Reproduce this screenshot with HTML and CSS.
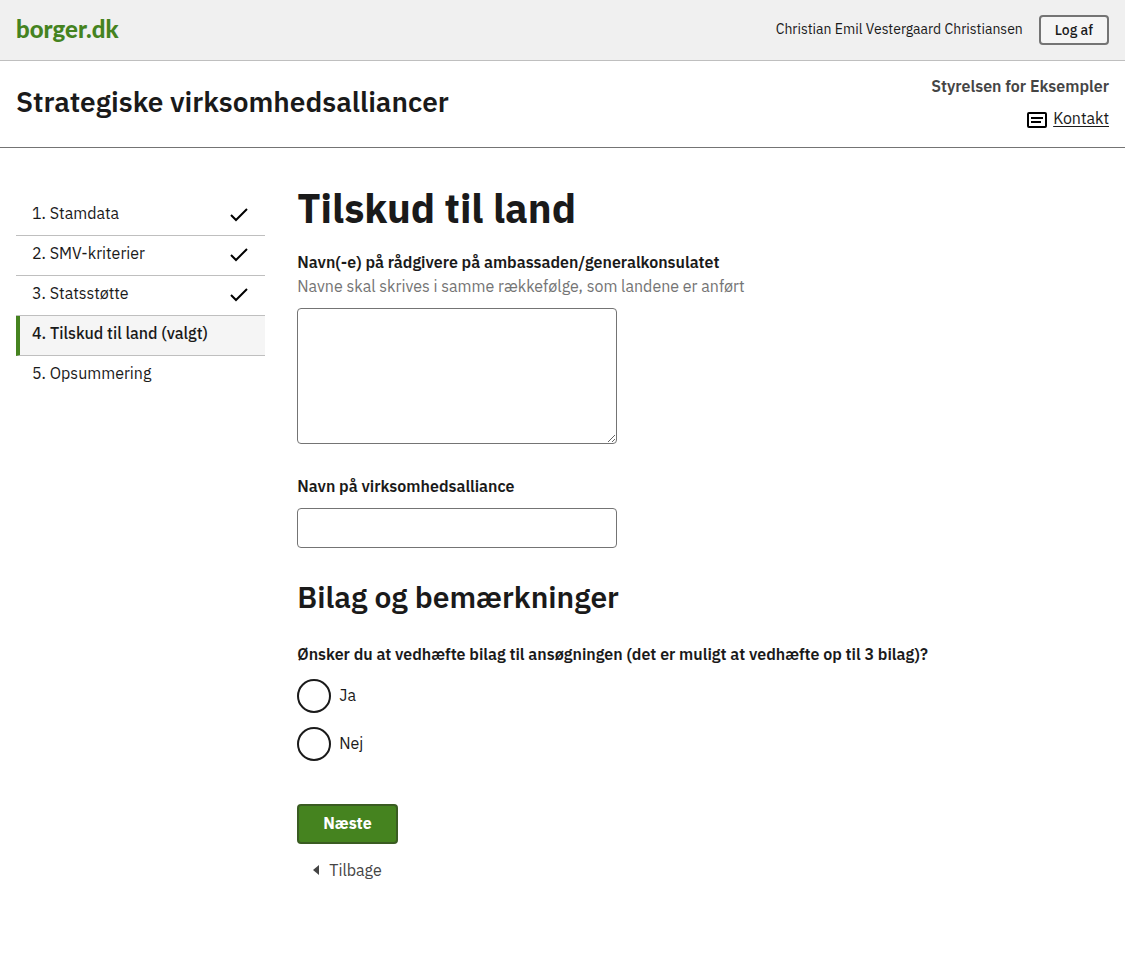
FILE: index.html
```html
<!DOCTYPE html>
<html lang="da">
<head>
<meta charset="utf-8">
<meta name="viewport" content="width=device-width, initial-scale=1">
<title>Tilskud til land - Strategiske virksomhedsalliancer</title>
<link rel="stylesheet" href="styles.css">
</head>
<body>
<header>
  <div class="portal-bar">
    <a class="logo" href="#">borger.dk</a>
    <div class="session">
      <span class="user-name">Christian Emil Vestergaard Christiansen</span>
      <button class="logout" type="button">Log af</button>
    </div>
  </div>
  <div class="solution-bar">
    <p class="solution-title">Strategiske virksomhedsalliancer</p>
    <div class="authority">
      <span class="authority-name">Styrelsen for Eksempler</span>
      <a class="contact" href="#">
        <svg class="contact-icon" viewBox="0 0 20 16" aria-hidden="true"><rect x="1" y="1" width="18" height="14" rx="1" fill="none" stroke="#000" stroke-width="2"/><path d="M4 6h12M4 10h10" stroke="#000" stroke-width="2"/></svg>
        <span class="contact-text">Kontakt</span>
      </a>
    </div>
  </div>
</header>
<div class="page">
  <nav class="steps" aria-label="Trin">
    <ol class="step-list">
      <li><a class="step" href="#">1. Stamdata <svg class="check" viewBox="0 0 18 14" aria-hidden="true"><path d="M1 7l5 5L17 1" fill="none" stroke="#000" stroke-width="2"/></svg></a></li>
      <li><a class="step" href="#">2. SMV-kriterier <svg class="check" viewBox="0 0 18 14" aria-hidden="true"><path d="M1 7l5 5L17 1" fill="none" stroke="#000" stroke-width="2"/></svg></a></li>
      <li><a class="step" href="#">3. Statsstøtte <svg class="check" viewBox="0 0 18 14" aria-hidden="true"><path d="M1 7l5 5L17 1" fill="none" stroke="#000" stroke-width="2"/></svg></a></li>
      <li><a class="step step-current" href="#" aria-current="step">4. Tilskud til land (valgt)</a></li>
      <li><a class="step" href="#">5. Opsummering</a></li>
    </ol>
  </nav>
  <main class="content">
    <h1 class="title">Tilskud til land</h1>
    <form>
      <div class="field">
        <label class="label" for="advisers">Navn(-e) på rådgivere på ambassaden/generalkonsulatet</label>
        <span class="hint" id="advisers-hint">Navne skal skrives i samme rækkefølge, som landene er anført</span>
        <textarea class="input textarea" id="advisers" aria-describedby="advisers-hint"></textarea>
      </div>
      <div class="field">
        <label class="label" for="alliance">Navn på virksomhedsalliance</label>
        <input class="input" id="alliance" type="text">
      </div>
      <h2 class="subtitle">Bilag og bemærkninger</h2>
      <fieldset class="choices">
        <legend class="label">Ønsker du at vedhæfte bilag til ansøgningen (det er muligt at vedhæfte op til 3 bilag)?</legend>
        <div class="choice"><input class="radio" type="radio" name="attach" id="attach-yes"><label class="choice-label" for="attach-yes">Ja</label></div>
        <div class="choice"><input class="radio" type="radio" name="attach" id="attach-no"><label class="choice-label" for="attach-no">Nej</label></div>
      </fieldset>
      <div class="actions">
        <button class="next" type="button">Næste</button>
        <a class="back" href="#"><svg class="back-icon" viewBox="0 0 6 10" aria-hidden="true"><path d="M6 0v10L0 5z" fill="#454545"/></svg>Tilbage</a>
      </div>
    </form>
  </main>
</div>
</body>
</html>
```
FILE: styles.css
```css
* { box-sizing: border-box; }

body {
  margin: 0;
  background: #fff;
  color: #1a1a1a;
  font-family: "IBM Plex Sans", Inter, "Noto Sans", sans-serif;
  font-size: 16px;
  font-weight: 400;
  line-height: 24px;
}

.portal-bar {
  display: flex;
  align-items: center;
  justify-content: space-between;
  padding: 15px 16px;
  background: #f0f0f0;
  border-bottom: 1px solid #bfbfbf;
}

.logo {
  padding-bottom: 2px;
  color: #45831f;
  font-family: Lato, sans-serif;
  font-size: 24px;
  font-weight: 900;
  line-height: 28px;
  text-decoration: none;
}

.session {
  display: flex;
  align-items: center;
  gap: 16px;
  font-size: 14px;
}

.user-name { padding-bottom: 2px; }

.logout {
  height: 30px;
  padding: 0 14px;
  background: #f5f5f5;
  border: 2px solid #747474;
  border-radius: 4px;
  color: #1a1a1a;
  font: inherit;
  font-weight: 500;
}

.solution-bar {
  display: flex;
  justify-content: space-between;
  padding: 12px 16px 16px;
  border-bottom: 1px solid #747474;
}

.solution-title {
  margin: 9px 0 0;
  font-size: 28px;
  font-weight: 600;
  line-height: 40px;
}

.authority {
  display: flex;
  flex-direction: column;
  align-items: flex-end;
  gap: 8px;
  padding: 1px 0;
}

.authority-name {
  color: #454545;
  font-weight: 600;
}

.contact {
  display: flex;
  align-items: center;
  gap: 6px;
  color: #1a1a1a;
  text-decoration: none;
}

.contact-icon {
  width: 20px;
  height: 16px;
  margin-top: 4px;
}

.contact-text {
  text-decoration: underline;
  text-underline-offset: 2px;
}

.page {
  display: grid;
  grid-template-columns: repeat(12, minmax(0, 1fr));
  column-gap: 32px;
  padding: 32px 16px;
}

.steps {
  grid-column: span 3;
  padding-top: 16px;
}

.step-list {
  margin: 0;
  padding: 0;
  list-style: none;
}

.step {
  display: flex;
  align-items: center;
  justify-content: space-between;
  min-height: 40px;
  padding: 4px 16px 10px;
  border-bottom: 1px solid #bfbfbf;
  color: #1a1a1a;
  text-decoration: none;
}

.step-list li:last-child .step { border-bottom-color: transparent; }

.check {
  width: 18px;
  height: 14px;
  margin: 4px 1px 0 0;
}

.step-current {
  padding-left: 12px;
  background: #f5f5f5;
  border-left: 4px solid #45831f;
  font-weight: 500;
}

.content { grid-column: span 9; }

.title {
  margin: 0 0 14px;
  font-size: 40px;
  font-weight: 700;
  line-height: 56px;
}

.field {
  display: flex;
  flex-direction: column;
  align-items: flex-start;
  margin-bottom: 30px;
}

.label {
  padding: 0;
  font-weight: 600;
}

.hint { color: #747474; }

.input {
  width: 320px;
  max-width: 100%;
  height: 40px;
  margin-top: 10px;
  padding: 8px;
  background: #fff;
  border: 1px solid #747474;
  border-radius: 4px;
  font: inherit;
}

.textarea { height: 136px; }

.subtitle {
  margin: 0 0 26px;
  font-size: 30px;
  font-weight: 600;
  line-height: 38px;
}

.choices {
  display: flex;
  flex-direction: column;
  gap: 14px;
  min-width: 0;
  margin: 0;
  padding: 0;
  border: 0;
}

.choices .label { margin-bottom: 13px; }

.choice {
  display: flex;
  align-items: center;
  gap: 8px;
}

.choice-label { padding-bottom: 2px; }

.radio {
  appearance: none;
  width: 34px;
  height: 34px;
  margin: 0;
  border: 2px solid #1a1a1a;
  border-radius: 50%;
}

.radio:checked { box-shadow: inset 0 0 0 6px #fff; background: #1a1a1a; }

.actions {
  display: flex;
  flex-direction: column;
  align-items: flex-start;
  gap: 14px;
  margin-top: 43px;
}

.next {
  height: 40px;
  padding: 0 24px 2px;
  background: #45831f;
  border: 2px solid #3a5c22;
  border-radius: 4px;
  color: #fff;
  font: inherit;
  font-weight: 700;
}

.back {
  display: flex;
  align-items: center;
  gap: 10px;
  padding-left: 16px;
  color: #454545;
  text-decoration: none;
}

.back-icon { width: 6px; height: 10px; }
```
